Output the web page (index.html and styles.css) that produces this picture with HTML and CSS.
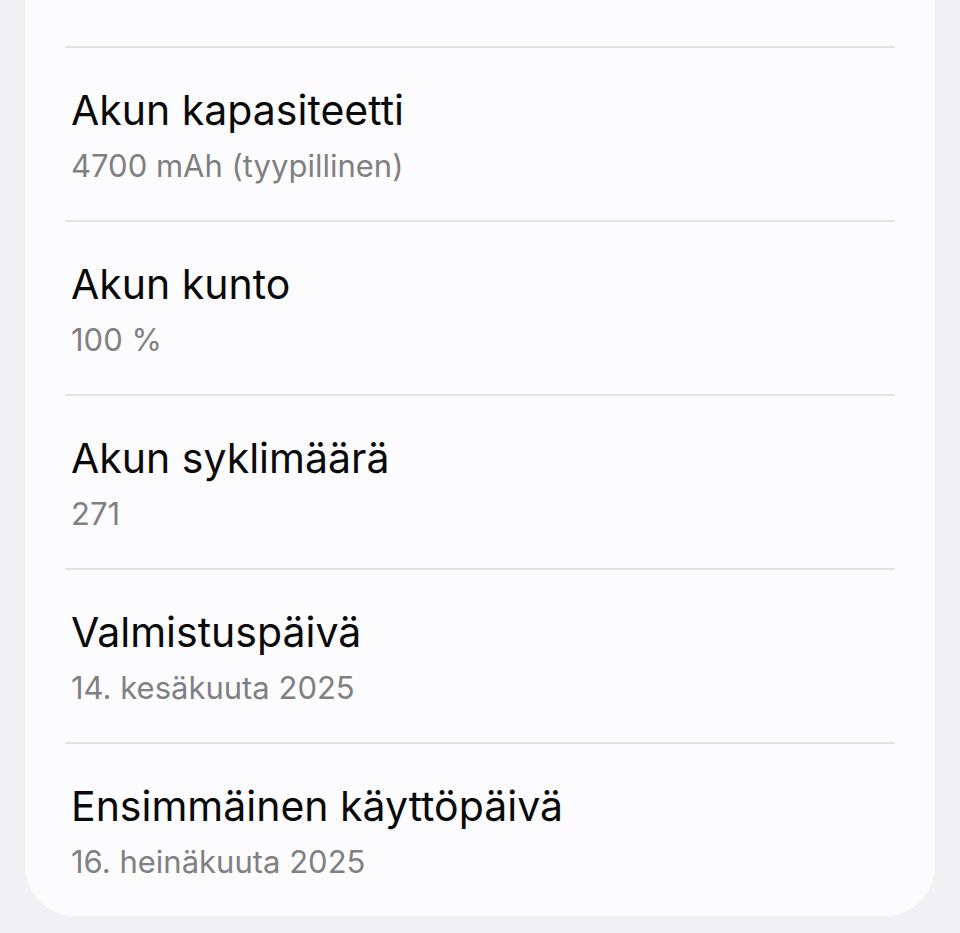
FILE: index.html
```html
<!DOCTYPE html>
<html lang="fi">
<head>
    <meta charset="UTF-8">
    <meta name="viewport" content="width=device-width, initial-scale=1.0">
    <title>Akun tiedot</title>
    <link rel="stylesheet" href="styles.css">
</head>
<body>

    <!-- Battery info card -->
    <div class="info-card">
        <div class="info-top"></div>

        <div class="info-item">
            <p class="info-title">Akun kapasiteetti</p>
            <p class="info-value">4700 mAh (tyypillinen)</p>
        </div>
        <div class="info-item">
            <p class="info-title">Akun kunto</p>
            <p class="info-value">100 %</p>
        </div>
        <div class="info-item">
            <p class="info-title">Akun syklimäärä</p>
            <p class="info-value">271</p>
        </div>
        <div class="info-item">
            <p class="info-title">Valmistuspäivä</p>
            <p class="info-value">14. kesäkuuta 2025</p>
        </div>
        <div class="info-item">
            <p class="info-title">Ensimmäinen käyttöpäivä</p>
            <p class="info-value">16. heinäkuuta 2025</p>
        </div>
    </div>

</body>
</html>
```

FILE: styles.css
```css
body {
    font-family: Inter, "Noto Sans", sans-serif;
    margin: 0;
    padding: 0;
    background-color: #f1f1f3;
}
.info-card {
    margin: 0 25px;
    padding: 0 40px;
    background-color: #fcfcfe;
    border-radius: 0 0 50px 50px;
}
.info-top {
    height: 46px;
}
.info-item {
    border-top: 2px solid #e3e3e5;
    padding: 37px 6px 34px 6px;
}
.info-title {
    margin: 0 0 10px 0;
    font-size: 41px;
    line-height: 50px;
    color: #0a0a0a;
}
.info-value {
    margin: 0;
    font-size: 31px;
    line-height: 41px;
    color: #808082;
}
```
